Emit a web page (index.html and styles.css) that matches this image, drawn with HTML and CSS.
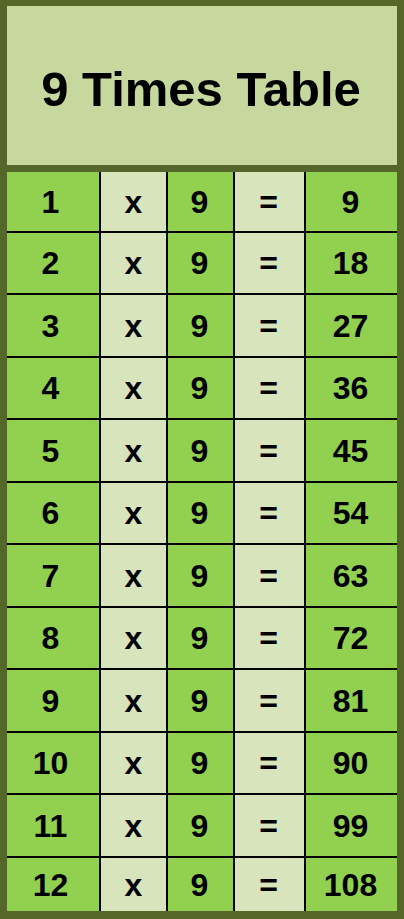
FILE: index.html
```html
<!DOCTYPE html>
<html>
<head>
<meta charset="utf-8">
<title>9 Times Table</title>
<link rel="stylesheet" href="styles.css">
</head>
<body>
<div class="sheet">
  <div class="title">9 Times Table</div>
  <div class="table">
    <div class="cell g a">1</div><div class="cell l">x</div><div class="cell g b">9</div><div class="cell l b">=</div><div class="cell g b">9</div>
    <div class="cell g a">2</div><div class="cell l">x</div><div class="cell g b">9</div><div class="cell l b">=</div><div class="cell g b">18</div>
    <div class="cell g a">3</div><div class="cell l">x</div><div class="cell g b">9</div><div class="cell l b">=</div><div class="cell g b">27</div>
    <div class="cell g a">4</div><div class="cell l">x</div><div class="cell g b">9</div><div class="cell l b">=</div><div class="cell g b">36</div>
    <div class="cell g a">5</div><div class="cell l">x</div><div class="cell g b">9</div><div class="cell l b">=</div><div class="cell g b">45</div>
    <div class="cell g a">6</div><div class="cell l">x</div><div class="cell g b">9</div><div class="cell l b">=</div><div class="cell g b">54</div>
    <div class="cell g a">7</div><div class="cell l">x</div><div class="cell g b">9</div><div class="cell l b">=</div><div class="cell g b">63</div>
    <div class="cell g a">8</div><div class="cell l">x</div><div class="cell g b">9</div><div class="cell l b">=</div><div class="cell g b">72</div>
    <div class="cell g a">9</div><div class="cell l">x</div><div class="cell g b">9</div><div class="cell l b">=</div><div class="cell g b">81</div>
    <div class="cell g a">10</div><div class="cell l">x</div><div class="cell g b">9</div><div class="cell l b">=</div><div class="cell g b">90</div>
    <div class="cell g a">11</div><div class="cell l">x</div><div class="cell g b">9</div><div class="cell l b">=</div><div class="cell g b">99</div>
    <div class="cell g a">12</div><div class="cell l">x</div><div class="cell g b">9</div><div class="cell l b">=</div><div class="cell g b">108</div>
  </div>
</div>
</body>
</html>
```
FILE: styles.css
```css
html, body {
  margin: 0;
  padding: 0;
  background: #55662a;
}

.sheet {
  width: 404px;
  height: 919px;
  box-sizing: border-box;
  padding: 6px 7px 8px 7px;
  background: #55662a;
  display: flex;
  flex-direction: column;
  font-family: "Liberation Sans", Arial, sans-serif;
  font-weight: bold;
  color: #000;
}

.title {
  height: 159px;
  margin-bottom: 7px;
  background: #c6d89d;
  display: flex;
  align-items: center;
  justify-content: center;
  box-sizing: border-box;
  padding-top: 6px;
  padding-right: 2px;
  font-size: 49px;
}

.table {
  display: grid;
  grid-template-columns: 92px 65px 65px 69px 91px;
  grid-template-rows: 59px 60px 61px 60px 61px 60px 61px 60px 61px 60px 61px 53px;
  gap: 2px;
  background: #000;
}

.cell {
  display: flex;
  align-items: center;
  justify-content: center;
  font-size: 32px;
  padding-top: 1px;
  box-sizing: border-box;
}

.a {
  padding-right: 5px;
}

.b {
  padding-right: 2px;
}

.g {
  background: #92d050;
}

.l {
  background: #d8e4bc;
}
```
